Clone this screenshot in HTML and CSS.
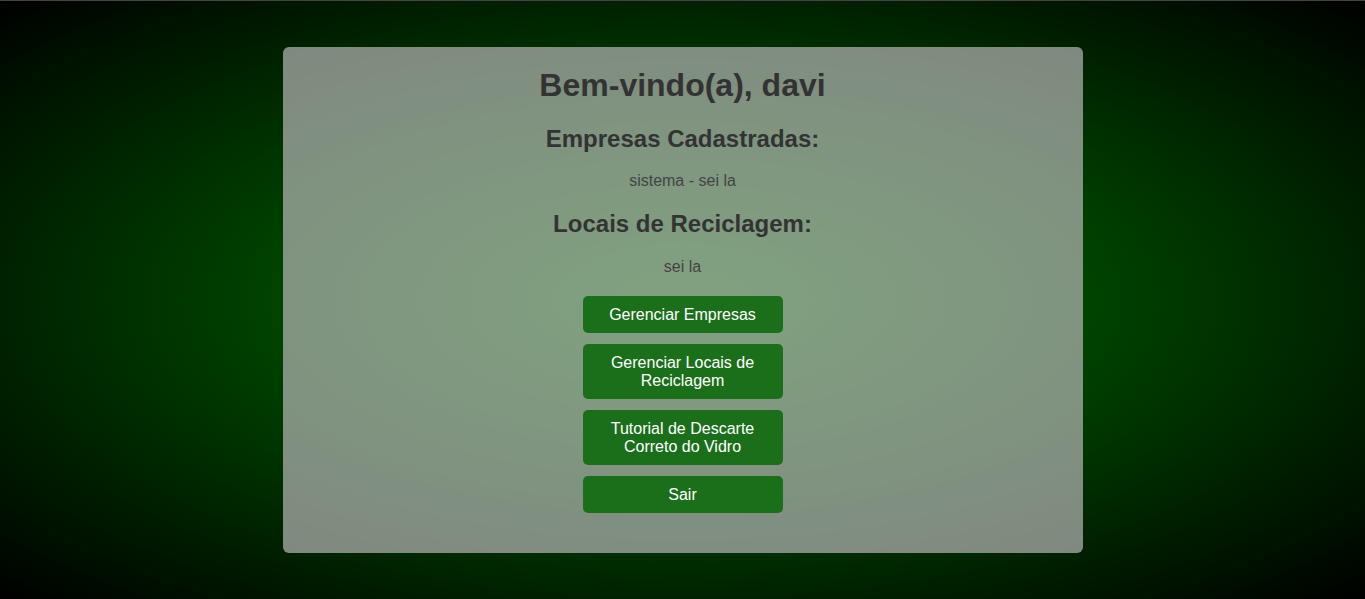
FILE: index.html
```html
<!DOCTYPE html>
<html lang="pt-BR">
<head>
<meta charset="utf-8">
<title>Painel</title>
<link rel="stylesheet" href="styles.css">
</head>
<body>
<div class="page">
  <main class="card">
    <h1 class="title">Bem-vindo(a), davi</h1>
    <h2 class="section-title first">Empresas Cadastradas:</h2>
    <p class="item">sistema - sei la</p>
    <h2 class="section-title">Locais de Reciclagem:</h2>
    <p class="item last">sei la</p>
    <div class="actions">
      <button class="btn">Gerenciar Empresas</button>
      <button class="btn">Gerenciar Locais de Reciclagem</button>
      <button class="btn">Tutorial de Descarte Correto do Vidro</button>
      <button class="btn">Sair</button>
    </div>
  </main>
</div>
</body>
</html>
```
FILE: styles.css
```css
html, body {
  margin: 0;
  padding: 0;
}
body {
  font-family: "Liberation Sans", Arial, sans-serif;
}
.page {
  box-sizing: border-box;
  height: 100vh;
  border-top: 1px solid #444;
  background: radial-gradient(ellipse at center, #007300 0%, #000 100%);
  overflow: hidden;
  display: flex;
  flex-direction: column;
  align-items: center;
}
.card {
  width: 800px;
  box-sizing: border-box;
  margin-top: 46px;
  padding: 20px 20px 40px;
  background: rgba(182, 182, 182, 0.7);
  border-radius: 6px;
  display: flex;
  flex-direction: column;
  align-items: center;
  text-align: center;
}
.title {
  margin: 0;
  font-size: 32px;
  line-height: 37px;
  font-weight: bold;
  color: #333;
}
.section-title {
  margin: 20px 0 0;
  font-size: 24px;
  line-height: 28px;
  font-weight: bold;
  color: #333;
}
.section-title.first {
  margin-top: 21px;
}
.item {
  margin: 18.5px 0 0;
  font-size: 16px;
  line-height: 18px;
  color: #444;
}
.item.last {
  margin-top: 20.5px;
}
.actions {
  margin-top: 19.5px;
  display: flex;
  flex-direction: column;
  gap: 11px;
}
.btn {
  width: 200px;
  box-sizing: border-box;
  padding: 10px 20px 9px;
  border: 0;
  border-radius: 5px;
  background: #1b6f1b;
  color: #fff;
  font-family: "Liberation Sans", Arial, sans-serif;
  font-size: 16px;
  line-height: 18px;
  cursor: pointer;
}
```
